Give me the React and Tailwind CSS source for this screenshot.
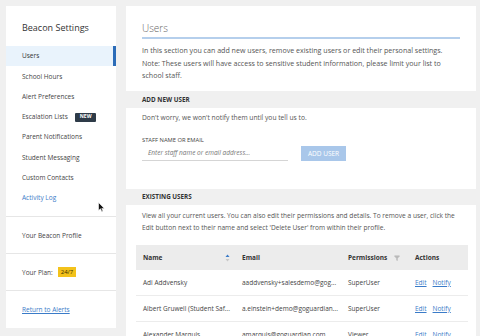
import { Filter } from 'lucide-react'

const navItems = [
  { label: 'Users', active: true },
  { label: 'School Hours' },
  { label: 'Alert Preferences' },
  { label: 'Escalation Lists', badge: 'NEW' },
  { label: 'Parent Notifications' },
  { label: 'Student Messaging' },
  { label: 'Custom Contacts' },
  { label: 'Activity Log', link: true },
]

const users = [
  { name: 'Adi Addvensky', email: 'aaddvensky+salesdemo@gog...', role: 'SuperUser' },
  { name: 'Albert Gruwell (Student Saf...', email: 'a.einstein+demo@goguardian...', role: 'SuperUser' },
  { name: 'Alexander Marquis', email: 'amarquis@goguardian.com', role: 'Viewer' },
]

function Sidebar() {
  return (
    <div className="w-[110px] h-[322px] bg-white flex flex-col shrink-0">
      <div className="h-[40px] shrink-0 flex items-center pt-[4px] pl-4 text-[9px] text-[#333]">Beacon Settings</div>
      <div className="flex flex-col shrink-0">
        {navItems.map(item => (
          <div
            key={item.label}
            className={`h-[20.3px] flex items-center pl-4 text-[6.5px] ${
              item.active ? 'bg-[#e9f3fc] border-r-[3px] border-[#2c6cb8] text-[#333]' : item.link ? 'text-[#3a7bc8]' : 'text-[#444]'
            }`}
          >
            {item.label}
            {item.badge && (
              <span className="ml-[7px] bg-[#2e3b48] text-white text-[5px] font-bold px-[5px] h-[9px] flex items-center rounded-[1px]">
                {item.badge}
              </span>
            )}
          </div>
        ))}
      </div>
      <div className="mt-[8px] shrink-0 border-t border-[#e6e6e6] h-[37px] flex items-center pl-4 text-[6.5px] text-[#444]">
        Your Beacon Profile
      </div>
      <div className="shrink-0 border-t border-[#e6e6e6] h-[37px] flex items-center pl-4 text-[6.5px] text-[#444]">
        Your Plan:
        <span className="ml-[5px] bg-[#f3c21b] text-[#3a3000] text-[6px] px-[3px] h-[10px] flex items-center">24/7</span>
      </div>
      <div className="border-t border-[#e6e6e6] flex-1 flex items-center pl-4 text-[6.5px] text-[#3a7bc8] underline">
        Return to Alerts
      </div>
    </div>
  )
}

function SortIcon() {
  return (
    <svg width="5" height="8" viewBox="0 0 5 8">
      <path d="M2.5 0.5 L4.5 3 L0.5 3 Z" fill="#3a7bc8" />
      <path d="M2.5 7.5 L4.5 5 L0.5 5 Z" fill="#c8c8c8" />
    </svg>
  )
}

function Main() {
  return (
    <div className="w-[350px] ml-[10px] flex flex-col">
      <div className="bg-white h-[85px] shrink-0 px-4 pt-[16px]">
        <div className="text-[10px] text-[#666] font-light leading-[12px]">Users</div>
        <div className="mt-[3px] h-[2px] bg-[#b5cfec]" />
        <p className="mt-[5px] text-[7.1px] leading-[12.5px] text-[#555] whitespace-nowrap">
          In this section you can add new users, remove existing users or edit their personal settings.
          <br />
          Note: These users will have access to sensitive student information, please limit your list to
          <br />
          school staff.
        </p>
      </div>

      <div className="h-[17px] shrink-0 flex items-center px-4 text-[6.3px] font-bold text-[#333] bg-[#f0f0f0]">ADD NEW USER</div>

      <div className="bg-white h-[81px] shrink-0 px-4 pt-[4px]">
        <p className="text-[6.7px] leading-[12px] text-[#555]">Don't worry, we won't notify them until you tell us to.</p>
        <div className="mt-[12px] text-[5.8px] text-[#444] uppercase leading-[8px]">Staff name or email</div>
        <div className="mt-[2px] flex items-center gap-[13px]">
          <div className="w-[146px] h-[14px] border-b border-[#d5d5d5] flex items-center pl-[6px] text-[6.5px] italic text-[#777]">
            Enter staff name or email address...
          </div>
          <div className="w-[45px] h-[15px] bg-[#a9c7ea] text-white text-[6.5px] flex items-center justify-center">ADD USER</div>
        </div>
      </div>

      <div className="h-[16px] shrink-0 flex items-center px-4 text-[6.3px] font-bold text-[#333] bg-[#f0f0f0]">EXISTING USERS</div>

      <div className="bg-white flex-1 min-h-0 overflow-hidden pl-[10px] pr-[8px] pt-[5px]">
        <p className="px-[6px] text-[6.6px] leading-[12px] text-[#555] whitespace-nowrap">
          View all your current users. You can also edit their permissions and details. To remove a user, click the
          <br />
          Edit button next to their name and select 'Delete User' from within their profile.
        </p>
        <div className="mt-[11px]">
          <div className="grid grid-cols-[99px_106px_67px_1fr] h-[25px] items-center bg-[#ececec] text-[6.5px] font-bold text-[#333]">
            <div className="pl-[7px] flex items-center justify-between pr-[5px]">
              Name <SortIcon />
            </div>
            <div className="pl-[7px]">Email</div>
            <div className="pl-[7px] flex items-center justify-between pr-[8px]">
              Permissions <Filter size={6} className="text-[#bbb]" fill="#bbb" />
            </div>
            <div className="pl-[7px]">Actions</div>
          </div>
          {users.map(u => (
            <div key={u.name} className="grid grid-cols-[99px_106px_67px_1fr] h-[26px] items-center border-b border-[#ececec] text-[6.5px] text-[#444]">
              <div className="pl-[7px] whitespace-nowrap">{u.name}</div>
              <div className="pl-[7px] whitespace-nowrap">{u.email}</div>
              <div className="pl-[7px]">{u.role}</div>
              <div className="pl-[7px] flex gap-[6px] text-[#3a7bc8] underline">
                <span>Edit</span>
                <span>Notify</span>
              </div>
            </div>
          ))}
        </div>
      </div>
    </div>
  )
}

export default function App() {
  return (
    <div className="relative w-[480px] h-[336px] overflow-hidden bg-[#f0f0f0] flex pt-[6px] pl-[6px] font-['Open_Sans',sans-serif]">
      <Sidebar />
      <Main />
      <svg className="absolute left-[98px] top-[202px]" width="7" height="11" viewBox="0 0 7 11">
        <path d="M0.5 0.5 L0.5 8.5 L2.5 6.8 L3.8 9.8 L5 9.3 L3.8 6.4 L6.3 6.4 Z" fill="#111" stroke="#fff" strokeWidth="0.6" />
      </svg>
    </div>
  )
}
